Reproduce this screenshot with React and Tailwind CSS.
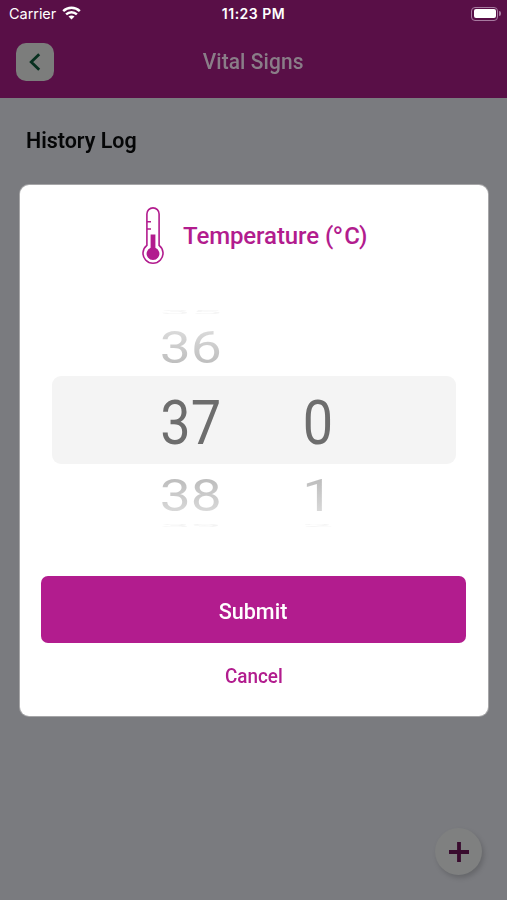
import React from "react";

const label = "block whitespace-nowrap leading-none";

function StatusBar() {
  return (
    <div className="grid h-[27px] grid-cols-3 items-center text-white">
      <div className="flex items-center gap-[6px] pl-[9px] pt-px font-['Inter',sans-serif] text-[14.5px]">
        <span className={`${label} w-[47px] tracking-[-0.05px]`}>Carrier</span>
        <svg width="19" height="14" viewBox="0 0 19 14" fill="none" stroke="currentColor" strokeWidth="2.5" className="-mt-[2px]">
          <path d="M1.2 5.1C5.9.6 13.1.6 17.8 5.1" />
          <path d="M4.1 8.3c3.1-2.9 7.7-2.9 10.8 0" />
          <path d="M6.5 10.6c1.6-1.5 4.4-1.5 6 0L9.5 13.6z" fill="currentColor" stroke="none" />
        </svg>
      </div>
      <span className={`${label} pt-px text-center font-['Inter',sans-serif] text-[14px] font-semibold tracking-[0.5px]`}>11:23 PM</span>
      <div className="flex items-center justify-end gap-px pr-[6px]">
        <div className="h-[14px] w-[27px] rounded-[4px] border border-[#a77aa0] p-[1.5px]">
          <div className="h-full w-full rounded-[2px] bg-white" />
        </div>
        <div className="h-[5px] w-[2px] rounded-r-full bg-[#a77aa0]" />
      </div>
    </div>
  );
}

function Header() {
  return (
    <header className="h-[98px] bg-[#590f47]">
      <StatusBar />
      <div className="grid h-[69px] grid-cols-[54px_1fr_54px] items-center">
        <button className="ml-4 flex size-[38px] items-center justify-center rounded-[10px] bg-[#7c7d7c]">
          <svg width="12" height="18" viewBox="0 0 12 18" fill="none" stroke="#07301f" strokeWidth="2.8">
            <path d="M10.2 1.2 2.2 9l8 7.8" />
          </svg>
        </button>
        <h1 className={`${label} text-center text-[22px] font-medium tracking-[0.1px] text-[#8a7d88]`}>
          <span className="inline-block scale-x-[0.95]">Vital Signs</span>
        </h1>
      </div>
    </header>
  );
}

function Thermometer() {
  return (
    <svg width="22" height="58" viewBox="0 0 22 58" fill="none" stroke="#b21c8e" strokeWidth="1.6">
      <path d="M4.9 38.3V7a6.1 6.1 0 0 1 12.2 0v31.3a10 10 0 1 1-12.2 0Z" />
      <path d="M5 14.8h4M5 22h4" />
      <path d="M8.6 27.5h4.8v13.2a6.4 6.4 0 1 1-4.8 0Z" fill="#b21c8e" stroke="none" />
    </svg>
  );
}

const rows = [
  { whole: "35", tenth: "", row: "h-4", text: "scale-x-[0.92] scale-y-[0.08] text-[#f5f5f5]" },
  { whole: "36", tenth: "", row: "h-14", text: "scale-x-[0.92] scale-y-[0.73] bg-linear-to-b from-[#dedede] to-[#b9b9b9] bg-clip-text text-transparent" },
  { whole: "37", tenth: "0", row: "h-[88px] rounded-[9px] bg-[#f4f4f4] pt-[7px]", text: "scale-x-[0.9] scale-y-[1.01] text-[#6d6d6d]" },
  { whole: "38", tenth: "1", row: "h-16", text: "scale-x-[0.92] scale-y-[0.73] bg-linear-to-b from-[#b9b9b9] to-[#dedede] bg-clip-text text-transparent" },
  { whole: "39", tenth: "2", row: "-mt-2 h-3", text: "scale-x-[0.92] scale-y-[0.06] text-[#f3f3f3]" },
];

function Wheel() {
  return (
    <div className="mx-8 mt-[39px]">
      {rows.map((r) => (
        <div key={r.whole} className={`flex items-center justify-center pl-px ${r.row}`}>
          {[r.whole, r.tenth].map((value, i) => (
            <div key={i} className="flex w-[127px] justify-center text-[60px] font-normal">
              <span className={`${label} ${r.text}`}>{value}</span>
            </div>
          ))}
        </div>
      ))}
    </div>
  );
}

function TemperatureDialog() {
  return (
    <section className="absolute top-[185px] left-5 h-[531px] w-[468px] rounded-[9px] bg-white shadow-[0_0_0_1px_#a6a6a8]">
      <div className="flex h-20 items-end pl-[122px]">
        <Thermometer />
        <h2 className="mb-[17px] ml-[19px] flex h-6 text-[24px] leading-none font-medium whitespace-nowrap text-[#b21c8e]">
          <span className="w-[142px] tracking-[-0.1px]">Temperature</span>
          <span>(</span>
          <span className="-ml-px w-[11px] text-[30px] leading-[28px] font-normal">°</span>
          <span className="ml-px">C</span>
          <span className="-ml-px">)</span>
        </h2>
      </div>
      <Wheel />
      <button className="mx-[21px] mt-[44px] flex h-[67px] w-[425px] items-center justify-center rounded-[7px] bg-[#b21c8e] pt-[5px] text-[22px] font-medium text-white">
        <span className={`${label} scale-x-[0.98]`}>Submit</span>
      </button>
      <button className="mx-auto mt-[24px] flex items-center text-[19.5px] font-medium text-[#b21c8e]">
        <span className={`${label} scale-x-[0.97]`}>Cancel</span>
      </button>
    </section>
  );
}

export default function App() {
  return (
    <main className="relative h-[900px] w-[507px] overflow-hidden bg-[#7a7b7f] font-['Roboto',sans-serif]">
      <Header />
      <h2 className={`${label} mt-[32px] ml-[25.5px] text-[22px] font-semibold text-[#050607]`}>
        <span className="inline-block origin-left scale-x-[0.975]">History Log</span>
      </h2>
      <TemperatureDialog />
      <button className="absolute top-[828px] left-[435px] flex size-[47px] items-center justify-center rounded-full bg-[#7f8080] shadow-[2px_3px_5px_rgba(0,0,0,0.17)]">
        <svg width="20" height="20" viewBox="0 0 20 20" stroke="#390b2e" strokeWidth="3.8">
          <path d="M10 0v20M0 10h20" />
        </svg>
      </button>
    </main>
  );
}
